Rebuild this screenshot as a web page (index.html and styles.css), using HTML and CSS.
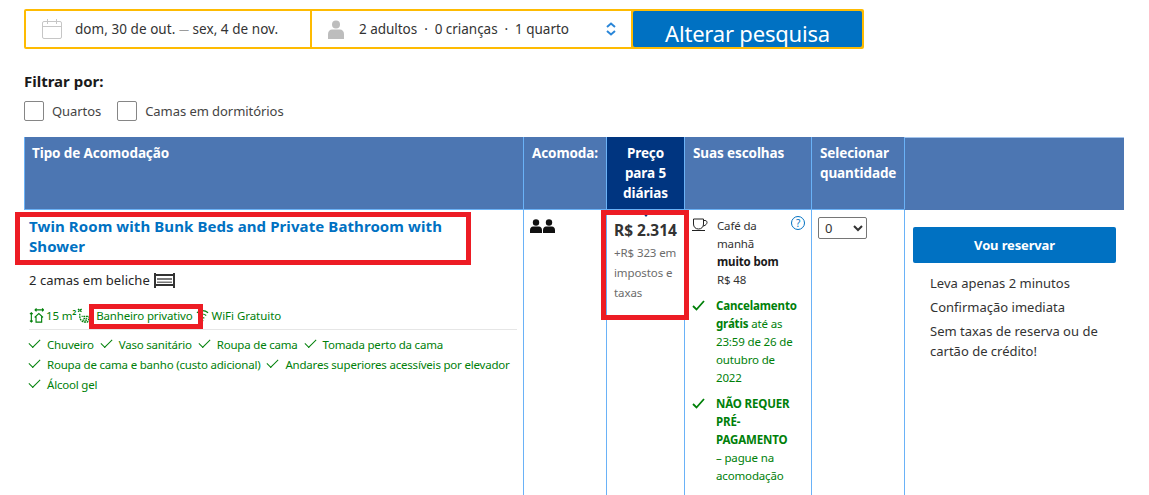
FILE: index.html
```html
<!DOCTYPE html>
<html lang="pt-BR">
<head>
<meta charset="utf-8">
<title>Disponibilidade</title>
<link rel="stylesheet" href="styles.css">
</head>
<body>
<div class="page">
  <form class="search">
    <div class="search-cell dates">
      <svg class="ico-cal" width="22" height="22" viewBox="0 0 22 22" fill="none" stroke="#c6c6c6" stroke-width="1"><rect x="1.5" y="3.5" width="19" height="17" rx="1.5"/><path d="M1.5 8.5h19M6.5 1v5M15.5 1v5"/></svg>
      <span class="dates-text">dom, 30 de out. <span class="dash">—</span> sex, 4 de nov.</span>
    </div>
    <div class="search-cell guests">
      <svg class="ico-person" width="18" height="19" viewBox="0 0 18 19" fill="#bdbdbd"><circle cx="9" cy="4.5" r="4"/><path d="M1 19v-5c0-3 2-4.500 4-4.500h8c2 0 4 1.500 4 4.500v5z"/></svg>
      <span class="guests-text">2 adultos &nbsp;·&nbsp; 0 crianças &nbsp;·&nbsp; 1 quarto</span>
      <svg class="ico-updown" width="10" height="14" viewBox="0 0 10 14" fill="none" stroke="#2a86d8" stroke-width="2"><path d="M1 5l4-3.500 4 3.500M1 9l4 3.500 4-3.500"/></svg>
    </div>
    <button class="search-btn" type="button">Alterar pesquisa</button>
  </form>

  <h2 class="filter-title">Filtrar por:</h2>
  <div class="filters">
    <label class="filter"><span class="box"></span>Quartos</label>
    <label class="filter"><span class="box"></span>Camas em dormitórios</label>
  </div>

  <div class="table">
    <div class="th th-first">Tipo de Acomodação</div>
    <div class="th">Acomoda:</div>
    <div class="th th-price">Preço para 5 diárias</div>
    <div class="th">Suas escolhas</div>
    <div class="th">Selecionar quantidade</div>
    <div class="th th-last"></div>

    <div class="td td-room">
      <a class="room-name">Twin Room with Bunk Beds and Private Bathroom with Shower</a>
      <div class="beds">2 camas em beliche
        <svg width="21" height="15" viewBox="0 0 21 15"><path fill="#333" d="M0 0h2v15H0zM19 0h2v15h-2zM2 1h17v2H2zM2 11h17v2H2z"/><path fill="#777" d="M3 5h15v2H3zM3 8.500h15v1.500H3z"/></svg>
      </div>
      <div class="facilities">
        <svg width="15" height="15" viewBox="0 0 16 16" fill="none" stroke="#008009" stroke-width="1.200"><path d="M7 2h8M8 .5L6.500 2 8 3.500M14 .5L15.500 2 14 3.500M2.500 5v10M1 6.500L2.500 5 4 6.500M1 13.500L2.500 15 4 13.500M6 10l4.500-4 4.500 4M7.500 9v6h6V9"/></svg>
        <span class="fac-size">15 m<sup>2</sup></span>
        <svg class="fac-bath-ico" width="13" height="15" viewBox="0 0 14 16" fill="none" stroke="#008009" stroke-width="1.400" stroke-dasharray="2 .8"><path d="M1 1l4 3M5 1L1 4M3 6v3c0 3 2 6 5 6h3c1 0 2-3 2-6H5M7 11h4M6 13h5"/></svg>
        <span class="fac-bath">Banheiro privativo</span>
        <svg class="fac-wifi-ico" width="13" height="15" viewBox="0 0 14 16" fill="none" stroke="#008009" stroke-width="1.200"><path d="M1 5c3.500-3 8.500-3 12 0M3 8c2.500-2 5.500-2 8 0M5 11c1.200-1 2.800-1 4 0"/><circle cx="7" cy="13.500" r="1" fill="#008009" stroke="none"/></svg>
        <span class="fac-wifi">WiFi Gratuito</span>
      </div>
      <ul class="amenities">
        <li>Chuveiro</li>
        <li>Vaso sanitário</li>
        <li>Roupa de cama</li>
        <li>Tomada perto da cama</li>
        <li>Roupa de cama e banho (custo adicional)</li>
        <li>Andares superiores acessíveis por elevador</li>
        <li>Álcool gel</li>
      </ul>
    </div>

    <div class="td td-guests">
      <svg width="25" height="14" viewBox="0 0 25 14" fill="#111"><circle cx="6" cy="3.500" r="3.200"/><path d="M0 14v-3c0-2 1.500-3.500 3-3.500h6c1.500 0 3 1.500 3 3.500v3z"/><circle cx="19" cy="3.500" r="3.200"/><path d="M13 14v-3c0-2 1.500-3.500 3-3.500h6c1.500 0 3 1.500 3 3.500v3z"/></svg>
    </div>

    <div class="td td-price">
      <div class="price">R$ 2.314</div>
      <div class="taxes">+R$ 323 em impostos e taxas</div>
    </div>

    <div class="td td-choices">
      <div class="choice choice-meal">
        <svg class="choice-ico" width="16" height="13" viewBox="0 0 16 13" fill="none" stroke="#222" stroke-width="1"><path d="M1.500 1h10v5c0 3-2 5-5 5s-5-2-5-5zM11.500 2.500h1.500c1.500 0 2 1 2 2s-1 3-3.800 3.500M0 12.500h13"/></svg>
        <div class="choice-text">Café da<br>manhã<br><b>muito bom</b><br>R$ 48</div>
        <svg class="help" width="14" height="14" viewBox="0 0 14 14" fill="none" stroke="#0071c2"><circle cx="7" cy="7" r="6.500"/><text x="7" y="10.500" text-anchor="middle" class="help-q">?</text></svg>
      </div>
      <div class="choice choice-green">
        <svg class="choice-ico check" width="13" height="11" viewBox="0 0 13 11" fill="none" stroke="#008009" stroke-width="1.800"><path d="M1 6l3.500 3.500L12 1"/></svg>
        <div class="choice-text"><b>Cancelamento<br>grátis</b> até as<br>23:59 de 26 de<br>outubro de<br>2022</div>
      </div>
      <div class="choice choice-green">
        <svg class="choice-ico check" width="13" height="11" viewBox="0 0 13 11" fill="none" stroke="#008009" stroke-width="1.800"><path d="M1 6l3.500 3.500L12 1"/></svg>
        <div class="choice-text"><b>NÃO REQUER PRÉ-PAGAMENTO</b><br>– pague na acomodação</div>
      </div>
    </div>

    <div class="td td-qty">
      <select class="qty"><option>0</option></select>
    </div>

    <div class="td td-book">
      <button class="book-btn" type="button">Vou reservar</button>
      <ul class="book-notes">
        <li>Leva apenas 2 minutos</li>
        <li>Confirmação imediata</li>
        <li>Sem taxas de reserva ou de cartão de crédito!</li>
      </ul>
    </div>
  </div>

  <div class="mark mark-title"></div>
  <div class="mark mark-bath"></div>
  <div class="mark mark-price"></div>
</div>
</body>
</html>
```

FILE: styles.css
```css
* { box-sizing: border-box; }
html, body { margin: 0; height: 495px; overflow: hidden; background: #fff; }
body { font-family: "Noto Sans", "Open Sans", sans-serif; color: #262626; font-size: 13px; }
.page { position: relative; width: 1149px; height: 495px; padding: 9px 25px 0 24px; overflow: hidden; }

.search { display: flex; width: 840px; height: 40px; border: 2px solid #febb02; border-radius: 2px; background: #febb02; gap: 2px; }
.search-cell { display: flex; align-items: center; background: #fff; }
.dates { width: 284px; padding-left: 15px; }
.ico-cal { margin-right: 12px; }
.dates-text { font-size: 13.500px; color: #333; letter-spacing: 0.05px; }
.dash { color: #9b9b9b; font-size: 10px; vertical-align: 1.500px; }
.guests { width: 319px; padding-left: 15px; position: relative; }
.ico-person { margin-right: 14px; }
.guests-text { font-size: 13.500px; letter-spacing: -0.03px; color: #333; }
.ico-updown { margin-left: auto; margin-right: 15px; }
.search-btn { flex: 1; border: 0; background: #0071c2; color: #fff; font: 22px/1 "Noto Sans", sans-serif; padding: 8px 0 0; border-radius: 2px; overflow: hidden; letter-spacing: -0.2px; }

.filter-title { margin: 22px 0 0; font-size: 15px; line-height: 20px; font-weight: 700; color: #1a1a1a; letter-spacing: 0; }
.filters { display: flex; gap: 16px; margin-top: 10px; }
.filter { display: flex; align-items: center; gap: 8px; font-size: 13px; color: #444; letter-spacing: -0.06px; }
.box { width: 20px; height: 20px; border: 1px solid #868686; border-radius: 2px; }

.table { display: grid; grid-template-columns: 499px 83px 78px 127px 93px 220px; grid-template-rows: 73px 286px; margin-top: 16px; width: 1100px; }
.th { background: #4c76b2; color: #fff; font-weight: 700; font-size: 13.500px; line-height: 20px; padding: 6px 8px 0; border-left: 1px solid #6ab2f7; border-bottom: 1px solid #6ab2f7; letter-spacing: -0.1px; }
.th-first { padding-left: 7px; }
.th-price { background: #003580; text-align: center; padding: 6px 14px 0; position: relative; }
.th-price::after { content: ""; position: absolute; left: 34px; bottom: -8px; border: 5px solid transparent; border-top: 6px solid #003580; border-bottom: 0; z-index: 1; }
.th-last { border-top: 1px solid #a3c4ec; border-bottom-color: #4c76b2; }
.td { border-left: 1px solid #6ab2f7; padding: 6px 6px 0; }

.td-room { padding: 6px 6px 0 4px; border-left-color: transparent; }
.room-name { display: block; font-weight: 700; font-size: 15px; line-height: 20px; color: #0071c2; letter-spacing: 0.09px; max-width: 430px; }
.beds { display: flex; align-items: center; gap: 4px; margin-top: 14px; font-size: 13px; line-height: 20px; letter-spacing: 0.05px; }
.facilities { display: flex; align-items: center; margin-top: 16px; height: 24px; padding-bottom: 4px; border-bottom: 1px solid #e6e6e6; font-size: 11.500px; color: #008009; letter-spacing: -0.15px; width: 488px; }
.fac-size { margin-left: 2px; }
.fac-size sup { font-size: 7px; line-height: 0; font-weight: 700; }
.fac-bath-ico { margin-left: 1px; }
.fac-bath { margin-left: 6px; }
.fac-wifi-ico { margin-left: 3px; }
.fac-wifi { margin-left: 3px; letter-spacing: -0.05px; }
.amenities { list-style: none; margin: 5px 0 0; padding: 0; display: flex; flex-wrap: wrap; column-gap: 7px; width: 490px; font-size: 11.500px; line-height: 20px; color: #008009; letter-spacing: -0.2px; }
.amenities li::before { content: ""; display: inline-block; width: 10px; height: 5px; margin: 0 7px 4px 0; border-left: 1px solid #008009; border-bottom: 1px solid #008009; transform: rotate(-45deg); }

.td-guests { padding: 9px 0 0 6px; }
.td-price { padding: 10px 4px 0 7px; }
.price { font-size: 15.500px; line-height: 20px; font-weight: 700; color: #333; }
.taxes { font-size: 11.500px; line-height: 20px; color: #6b6b6b; letter-spacing: -0.1px; margin-top: 3px; }

.td-choices { padding: 6px 6px 0 7px; font-size: 11.500px; line-height: 18px; letter-spacing: -0.15px; }
.choice { display: flex; position: relative; margin-bottom: 8px; }
.choice-ico { flex: none; margin-right: 8px; margin-top: 2px; }
.check { margin-right: 10px; margin-top: 3px; }
.choice-text { flex: 1; padding-right: 3px; }
.choice-meal .choice-text { color: #333; padding: 1px 0 0 1px; }
.choice-meal b { color: #1a1a1a; }
.choice-green .choice-text { color: #008009; padding-left: 1px; }
.help { position: absolute; right: 0; top: 0; }
.help-q { font-size: 10px; fill: #0071c2; stroke: none; }

.td-qty { padding: 7px 0 0 6px; }
.qty { width: 49px; height: 22px; font: 13px "Noto Sans", sans-serif; background: #fff; border: 1px solid #767676; border-radius: 2px; color: #333; padding: 0 0 0 2px; }

.td-book { padding: 17px 8px 0 8px; }
.book-btn { display: block; width: 203px; height: 36px; border: 0; border-radius: 2px; background: #0071c2; color: #fff; font: 700 13px "Noto Sans", sans-serif; letter-spacing: -0.15px; }
.book-notes { list-style: none; margin: 10px 0 0; padding: 0 0 0 17px; font-size: 13px; line-height: 20px; letter-spacing: 0; color: #333; }
.book-notes li { margin-bottom: 4px; }

.mark { position: absolute; border: 5px solid #ed1c24; z-index: 2; }
.mark-title { left: 15px; top: 212px; width: 456px; height: 53px; }
.mark-bath { left: 89px; top: 304px; width: 114px; height: 25px; }
.mark-price { left: 601px; top: 210px; width: 88px; height: 110px; }
```
